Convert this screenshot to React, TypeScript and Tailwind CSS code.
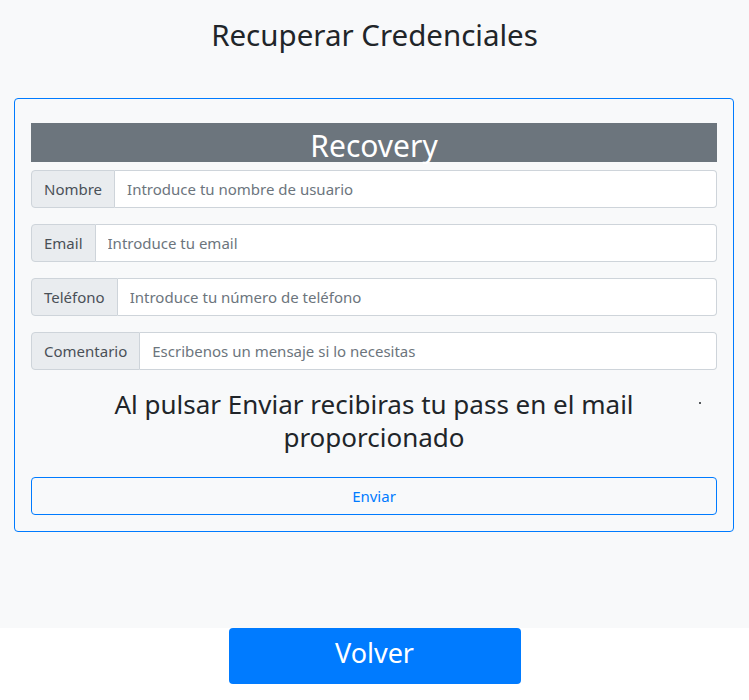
import React from "react";

const groups = [
  { label: "Nombre", ph: "Introduce tu nombre de usuario" },
  { label: "Email", ph: "Introduce tu email" },
  { label: "Teléfono", ph: "Introduce tu número de teléfono" },
  { label: "Comentario", ph: "Escribenos un mensaje si lo necesitas" },
];

export default function App() {
  return (
    <div className="min-h-screen bg-white font-['Noto_Sans',sans-serif] text-[#212529]">
      <div className="bg-[#f8f9fa] h-[628px] pt-[17px]">
        <h1 className="text-center text-[29.5px] leading-[36px] font-normal">Recuperar Credenciales</h1>
        <div className="ml-[14px] mr-[15px] mt-[45px] border border-[#007bff] rounded-[4px] px-[16px] pt-[24px] pb-[16px]">
          <div className="bg-[#6c757d] h-[39px] flex items-end justify-center text-white text-[30px] leading-[39px]">
            <span className="relative top-[3px]">Recovery</span>
          </div>
          <div className="mt-[8px] flex flex-col gap-[16px]">
            {groups.map((g) => (
              <div key={g.label} className="flex h-[38px]">
                <div className="flex items-center px-[12px] bg-[#e9ecef] border border-[#ced4da] rounded-l-[4px] text-[15px] text-[#495057]">
                  {g.label}
                </div>
                <input
                  className="flex-1 min-w-0 border border-l-0 border-[#ced4da] bg-white rounded-r-[4px] px-[12px] text-[15px] text-[#495057] placeholder:text-[#6c757d] outline-none"
                  placeholder={g.ph}
                />
              </div>
            ))}
          </div>
          <div className="relative mt-[18px]">
            <p className="mx-auto w-[560px] text-center text-[26px] leading-[33px]">
              Al pulsar Enviar recibiras tu pass en el mail proporcionado
            </p>
            <span className="absolute left-[668px] top-[14px] w-[2px] h-[2px] rounded-full bg-[#212529]"></span>
          </div>
          <button className="mt-[23px] w-full h-[38px] border border-[#007bff] rounded-[4px] text-[#007bff] text-[15px] bg-transparent">
            Enviar
          </button>
        </div>
      </div>
      <div className="flex justify-center">
        <button className="w-[292px] h-[56px] pb-[5px] bg-[#007bff] text-white text-[27px] rounded-[4px]">Volver</button>
      </div>
    </div>
  );
}
